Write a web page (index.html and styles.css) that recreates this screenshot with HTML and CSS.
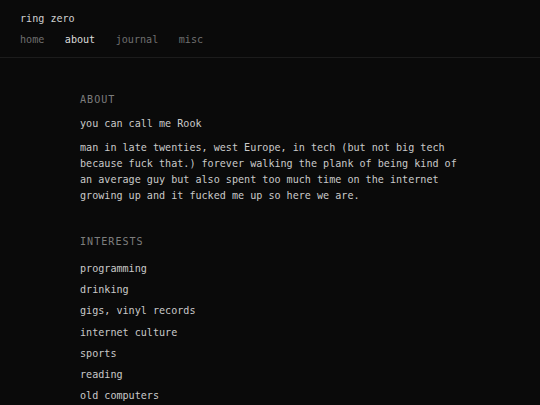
FILE: index.html
```html
<!DOCTYPE html>
<html lang="en">
<head>
<meta charset="utf-8">
<title>about - ring zero</title>
<link rel="stylesheet" href="styles.css">
</head>
<body>
<header class="site-header">
  <div class="site-title">ring zero</div>
  <nav class="site-nav">
    <a href="#" class="nav-link">home</a>
    <a href="#" class="nav-link active">about</a>
    <a href="#" class="nav-link">journal</a>
    <a href="#" class="nav-link">misc</a>
  </nav>
</header>
<main class="content">
  <section class="about">
    <h2 class="section-title">ABOUT</h2>
    <p class="lead">you can call me Rook</p>
    <p class="text">man in late twenties, west Europe, in tech (but not big tech because fuck that.) forever walking the plank of being kind of an average guy but also spent too much time on the internet growing up and it fucked me up so here we are.</p>
  </section>
  <section class="interests">
    <h2 class="section-title">INTERESTS</h2>
    <ul class="list">
      <li>programming</li>
      <li>drinking</li>
      <li>gigs, vinyl records</li>
      <li>internet culture</li>
      <li>sports</li>
      <li>reading</li>
      <li>old computers</li>
    </ul>
  </section>
</main>
</body>
</html>
```
FILE: styles.css
```css
html, body {
  margin: 0;
  padding: 0;
  background: #0a0a0a;
}
body {
  font-family: "DejaVu Sans Mono", "Liberation Mono", monospace;
  font-size: 10.1px;
  line-height: 16px;
  color: #c9c9c9;
  overflow: hidden;
}
.site-header {
  padding: 11px 20px 9px;
  border-bottom: 1px solid #1c1c1c;
  display: flex;
  flex-direction: column;
  gap: 5px;
}
.site-title {
  color: #d0d0d0;
}
.site-nav {
  display: flex;
  gap: 20.5px;
}
.nav-link {
  color: #6f6f6f;
  text-decoration: none;
}
.nav-link.active {
  color: #dcdcdc;
}
.content {
  width: 380px;
  margin: 0 auto;
  padding-top: 34px;
}
.section-title {
  margin: 0;
  font-size: 10.1px;
  font-weight: normal;
  letter-spacing: 1px;
  color: #7d7d7d;
}
.lead {
  margin: 8px 0 0;
}
.text {
  margin: 8px 0 0;
}
.interests {
  margin-top: 30px;
}
.list {
  list-style: none;
  margin: 11px 0 0;
  padding: 0;
  display: flex;
  flex-direction: column;
  gap: 5.2px;
}
```
